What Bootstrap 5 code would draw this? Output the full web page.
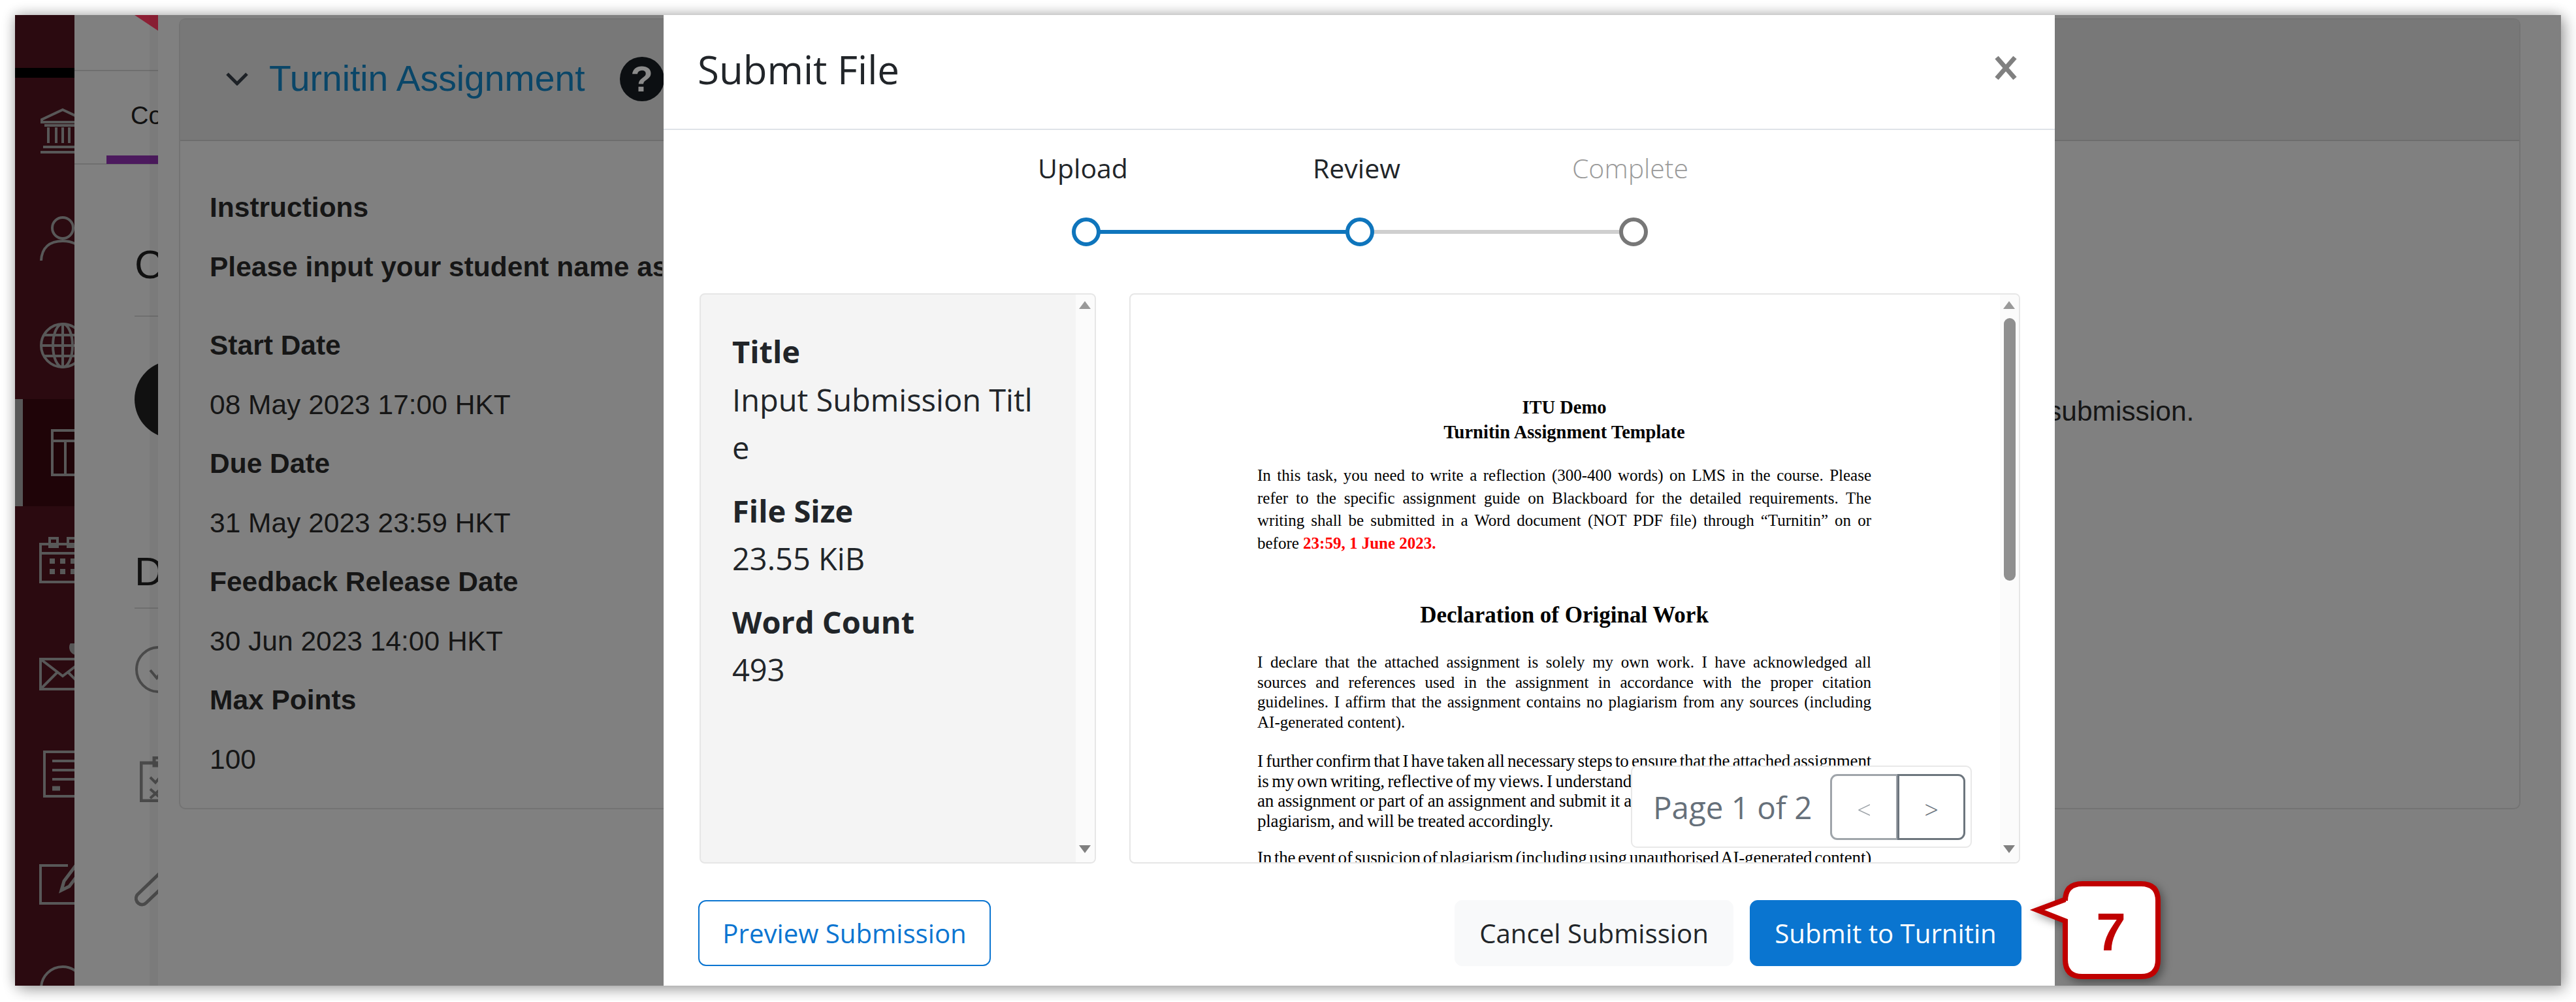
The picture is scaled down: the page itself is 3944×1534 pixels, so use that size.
<!DOCTYPE html>
<html lang="en">
<head>
    <meta charset="UTF-8">
    <title>Submit File</title>
    <link href="https://cdn.jsdelivr.net/npm/bootstrap@5.3.0/dist/css/bootstrap.min.css" rel="stylesheet">
    <style>
        html, body { background: #fff; margin: 0; }
        body { padding: 23px; font-family: "Liberation Sans", Arial, sans-serif; overflow: hidden; }

        .shot { width: 3898px; height: 1486px; position: relative; overflow: hidden; background: #808080; box-shadow: 6px 6px 22px rgba(0,0,0,.32), -2px -2px 18px rgba(0,0,0,.2); color: #161616; }
        .shot-wrap { height: 100%; }

        /* left sidebar */
        .side { width: 91px; background: #2b0a10; overflow: hidden; flex: none; }
        .side-top { height: 81px; border-bottom: 15px solid #000; box-sizing: content-box; }
        .side-item { height: 164px; padding-left: 37px; display: flex; align-items: center; }
        .side-item svg { width: 72px; height: 72px; flex: none; fill: none; stroke: #585858; stroke-width: 4; }
        .side-on { background: #1f0408; border-left: 12px solid #585858; padding-left: 43px; }

        /* strip between sidebar and card */
        .strip { width: 128px; flex: none; overflow: hidden; position: relative; white-space: nowrap; }
        .strip-top { height: 86px; border-bottom: 2px solid #6f6f6f; }
        .strip-tabs { height: 143px; border-bottom: 2px solid #6f6f6f; padding-left: 49px; }
        .strip-tab { height: 142px; border-bottom: 13px solid #4c1a5e; padding: 40px 0 0 37px; font-size: 38px; color: #111; width: 79px; overflow: hidden; }
        .strip-head { margin: 118px 0 0 92px; font-size: 62px; line-height: 70px; color: #111; width: 36px; overflow: hidden; }
        .strip-head-d { margin-top: 169px; }
        .strip-rule { margin: 43px 0 0 92px; height: 2px; width: 200px; background: #6f6f6f; }
        .strip-rule-d { margin-top: 20px; }
        .strip-avatar { width: 119px; height: 119px; border-radius: 50%; background: #111; margin: 67px 0 0 92px; }
        .strip-ico { display: block; margin-left: 92px; fill: none; stroke: #4a4a4a; stroke-width: 4; }
        .ico-check { margin-top: 56px; }
        .ico-list { margin: 96px 0 0 100px; }
        .ico-clip { margin-top: 92px; }
        .corner-flag { position: absolute; left: 92px; top: 0; width: 36px; height: 24px; background: #8d2035; clip-path: polygon(0 0, 100% 0, 100% 100%); }

        /* assignment panel behind the dialog */
        .panel { flex: 1 1 auto; padding: 5px 62px 0 32px; box-shadow: -13px 0 0 rgba(0,0,0,.035); position: relative; }
        .tii-card { height: 1211px; background: transparent; border: 2px solid #737373; border-radius: 10px; --bs-card-bg: transparent; }
        .tii-head { height: 186px; background: #787878; border-bottom: 2px solid #6d6d6d; padding: 0 0 2px 70px; }
        .tii-title { font-size: 55.3px; color: #0a4668; margin-left: 32px; line-height: 1; }
        .tii-help { width: 68px; height: 68px; border-radius: 50%; background: #0c0f12; color: #8a8a8a; font-weight: 700; font-size: 56px; line-height: 68px; text-align: center; margin-left: 53px; }
        .tii-body { padding: 57px 0 0 45px; font-size: 42.5px; line-height: 90.5px; white-space: nowrap; }
        .tii-clip { width: 693px; overflow: hidden; }
        .tii-gap { margin-top: 30px; }
        .tii-aside { position: absolute; left: 2859px; top: 369px; }

        /* dialog */
        .sf-modal { position: absolute; left: 993px; top: 0; bottom: 0; width: 2130px; background: #fff; border: 0; border-radius: 0; font-family: "Open Sans", "Liberation Sans", sans-serif; color: #212529; }
        .sf-head { height: 176px; padding: 0 57px 0 52px; border-bottom: 2px solid #dfe3e8; border-radius: 0; }
        .sf-title { font-size: 60px; line-height: 1; font-weight: 400; margin-top: -8px; }
        .sf-close { width: 36px; height: 36px; margin-top: -12px; display: block; }
        .sf-body { padding: 0 51px 0 55px; flex: none; }
        .sf-step-labels { padding: 28px 12px 0 0; font-size: 41px; line-height: 60px; }
        .sf-step-label { width: 419px; text-align: center; }
        .sf-step-off { color: #9a9a9a; font-weight: 300; }
        .sf-track { display: block; margin: 43px auto 0; width: 900px; height: 50px; transform: translateX(-1px); }
        .sf-panes { margin-top: 69px; height: 873px; gap: 51px; }
        .pane-info { width: 607px; border: 2px solid #e6e6e6; border-radius: 8px; overflow: hidden; flex: none; background: #f4f4f4; }
        .pane-doc { width: 1364px; border: 2px solid #e6e6e6; border-radius: 8px; overflow: hidden; flex: none; position: relative; background: #fff; }
        .info-text { padding: 51px 0 0 48px; font-size: 47px; line-height: 73.5px; flex: 1 1 auto; min-width: 0; }
        .info-text b { display: block; font-weight: 700; }
        .info-text span { display: block; width: 470px; word-break: break-all; margin-bottom: 23px; }
        .track-bar { width: 29px; flex: none; background: #fbfbfb; position: relative; }
        .track-up, .track-down { position: absolute; left: 5px; width: 0; height: 0; border-left: 9px solid transparent; border-right: 9px solid transparent; }
        .track-up { top: 10px; border-bottom: 12px solid #999; }
        .track-down { bottom: 14px; border-top: 12px solid #808080; }
        .track-thumb { position: absolute; left: 6px; top: 36px; width: 18px; height: 402px; border-radius: 9px; background: #8f8f8f; }

        .doc-page { width: 1331px; flex: none; height: 100%; overflow: hidden; padding: 154px 197px 0 194px; font-family: "Liberation Serif", "Times New Roman", serif; font-size: 25px; color: #000; text-align: justify; }
        .doc-title { text-align: center; font-weight: 700; font-size: 28.5px; line-height: 38px; }
        .doc-big { text-align: center; font-weight: 700; font-size: 35px; line-height: 44px; margin: 71px 0 35px; }
        .doc-p1 { line-height: 34.5px; margin: 30px 0 0; }
        .doc-p2 { line-height: 30.5px; margin: 0 0 29px; }
        .doc-p3 { font-size: 27px; line-height: 30.5px; letter-spacing: -.2px; word-spacing: -3px; white-space: nowrap; }
        .doc-line-full { text-align: justify; text-align-last: justify; white-space: normal; }
        .doc-line-part { width: 573px; text-align: justify; text-align-last: justify; white-space: normal; }
        .doc-line-last { word-spacing: -1px; margin-bottom: 26px; }
        .doc-red { color: #f00; font-weight: 700; }

        .pager-box { position: absolute; left: 766px; top: 721px; width: 522px; height: 126px; background: #fff; border: 2px solid #e8e8e8; border-radius: 9px; padding-right: 8px; }
        .pager-text { font-size: 47.5px; color: #66707a; margin: 2px 0 0 32px; line-height: 1; }
        .pager-btns .btn { width: 104px; height: 101px; font-size: 38px; font-weight: 300; line-height: 1; border-width: 3px; border-radius: 11px; padding: 8px 0 0; --bs-btn-color: #6c757d; --bs-btn-border-color: #6c757d; font-family: "Open Sans", sans-serif; }

        .sf-foot { padding: 56px 51px 0 53px; border: 0; }
        .sf-btn { height: 101px; font-size: 40.2px; line-height: 1; border-radius: 12px; padding: 2px 0 0; display: flex; align-items: center; justify-content: center; }
        .sf-preview { width: 448px; border: 2px solid #0b75d1; color: #0b75d1; background: #fff; }
        .sf-cancel { width: 427px; background: #f8f9fa; border-color: #f8f9fa; color: #212529; }
        .sf-submit { width: 416px; margin-left: 25px; background: #0a75d0; border-color: #0a75d0; color: #fff; }

        .note-bubble { position: absolute; left: 3082px; top: 1321px; width: 210px; height: 160px; filter: drop-shadow(4px 5px 7px rgba(0,0,0,.4)); }
        .note-bubble text { font-family: "Liberation Sans", sans-serif; font-weight: 700; font-size: 82px; fill: #c00000; }
    </style>
</head>
<body>
    <div class="shot">
        <div class="d-flex shot-wrap">
            <div class="side">
                <div class="side-top"></div>
                <div class="side-item"><svg viewBox="0 0 72 72"><path d="M36 3 68 18V22H4V18ZM8 27H64M14 30V54M26 30V54M46 30V54M58 30V54M36 30V54M6 60H66M2 68H70"/></svg></div>
                <div class="side-item"><svg viewBox="0 0 72 72"><circle cx="36" cy="20" r="16"/><path d="M3 70C4 50 16 40 36 40 56 40 68 50 69 70"/></svg></div>
                <div class="side-item"><svg viewBox="0 0 72 72"><circle cx="36" cy="36" r="33"/><ellipse cx="36" cy="36" rx="15" ry="33"/><path d="M36 3V69M3 36H69M8 20H64M8 52H64"/></svg></div>
                <div class="side-item side-on"><svg viewBox="0 0 72 72"><path d="M2 2H70V70H2ZM2 18H70M22 18V70M38 32H56V54H38Z"/></svg></div>
                <div class="side-item"><svg viewBox="0 0 72 72"><path d="M2 12H70V70H2ZM2 26H70M16 3H28V16H16ZM44 3H56V16H44Z"/><path stroke-width="8" d="M16 38H24M32 38H40M48 38H56M16 54H24M32 54H40M48 54H56"/></svg></div>
                <div class="side-item"><svg viewBox="0 0 72 72"><path d="M2 24H70V70H2ZM2 24 36 50 70 24M2 70 28 44M70 70 44 44"/><circle cx="58" cy="6" r="10" fill="#585858"/></svg></div>
                <div class="side-item"><svg viewBox="0 0 72 72"><path d="M8 2H70V70H8ZM20 16H56M20 30H56M20 44H56"/><path stroke-width="7" d="M20 58H32"/></svg></div>
                <div class="side-item"><svg viewBox="0 0 72 72"><path d="M44 12H2V70H62V40"/><path stroke-width="5" d="M34 50 38 36 62 4 70 12 46 44Z"/></svg></div>
                <div class="side-item"><svg viewBox="0 0 72 72"><circle cx="36" cy="36" r="33"/></svg></div>
            </div>

            <div class="strip">
                <div class="corner-flag"></div>
                <div class="strip-top"></div>
                <div class="strip-tabs"><div class="strip-tab">Co</div></div>
                <div class="strip-head">C</div>
                <div class="strip-rule"></div>
                <div class="strip-avatar"></div>
                <div class="strip-head strip-head-d">D</div>
                <div class="strip-rule strip-rule-d"></div>
                <svg class="strip-ico ico-check" width="74" height="74" viewBox="0 0 74 74"><circle cx="37" cy="37" r="34"/><path d="M24 38 34 50 52 26"/></svg>
                <svg class="strip-ico ico-list" width="70" height="70" viewBox="0 0 70 70"><path stroke-width="5" d="M2 10H60V68H2ZM22 2H42V14H22Z"/><path d="M16 32 24 40 36 26M16 50 32 64M32 50 16 64"/></svg>
                <svg class="strip-ico ico-clip" width="70" height="70" viewBox="0 0 70 70"><path stroke-width="5" d="M4 50 52 4 66 16 18 62C10 70 -2 60 4 50Z"/></svg>
            </div>

            <div class="panel">
                <div class="card tii-card">
                    <div class="card-header tii-head d-flex align-items-center">
                        <svg width="34" height="20" viewBox="0 0 34 20" fill="none" stroke="#1d2126" stroke-width="5"><path d="M2 2 17 17 32 2"/></svg>
                        <span class="tii-title">Turnitin Assignment</span>
                        <span class="tii-help">?</span>
                    </div>
                    <div class="card-body tii-body position-relative">
                        <div class="fw-bold">Instructions</div>
                        <div class="fw-bold tii-clip">Please input your student name as</div>
                        <div class="fw-bold tii-gap">Start Date</div>
                        <div>08 May 2023 17:00 HKT</div>
                        <div class="fw-bold">Due Date</div>
                        <div>31 May 2023 23:59 HKT</div>
                        <div class="fw-bold">Feedback Release Date</div>
                        <div>30 Jun 2023 14:00 HKT</div>
                        <div class="fw-bold">Max Points</div>
                        <div>100</div>
                        <div class="tii-aside">submission.</div>
                    </div>
                </div>
            </div>
        </div>

        <div class="modal-content sf-modal d-flex flex-column">
            <div class="modal-header sf-head d-flex justify-content-between align-items-center">
                <h5 class="modal-title sf-title">Submit File</h5>
                <svg class="sf-close" viewBox="0 0 36 36" stroke="#808080" stroke-width="7"><path d="M4 2 32 34M32 2 4 34"/></svg>
            </div>
            <div class="modal-body sf-body">
                <div class="sf-step-labels d-flex justify-content-center">
                    <div class="sf-step-label">Upload</div>
                    <div class="sf-step-label">Review</div>
                    <div class="sf-step-label sf-step-off">Complete</div>
                </div>
                <svg class="sf-track" viewBox="0 0 900 50" fill="#fff" stroke-width="6">
                    <path d="M30 25H450" stroke="#0f75bc"/>
                    <path d="M450 25H869" stroke="#cfcfcf"/>
                    <circle cx="31" cy="25" r="19" stroke="#0f75bc"/>
                    <circle cx="450" cy="25" r="19" stroke="#0f75bc"/>
                    <circle cx="869" cy="25" r="19" stroke="#777"/>
                </svg>
                <div class="sf-panes d-flex">
                    <div class="pane-info d-flex">
                        <div class="info-text">
                            <b>Title</b>
                            <span>Input Submission Title</span>
                            <b>File Size</b>
                            <span>23.55 KiB</span>
                            <b>Word Count</b>
                            <span>493</span>
                        </div>
                        <div class="track-bar"><i class="track-up"></i><i class="track-down"></i></div>
                    </div>
                    <div class="pane-doc d-flex">
                        <div class="doc-page">
                            <div class="doc-title">ITU Demo</div>
                            <div class="doc-title">Turnitin Assignment Template</div>
                            <p class="doc-p1">In this task, you need to write a reflection (300-400 words) on LMS in the course. Please refer to the specific assignment guide on Blackboard for the detailed requirements. The writing shall be submitted in a Word document (NOT PDF file) through “Turnitin” on or before <span class="doc-red">23:59, 1 June 2023.</span></p>
                            <div class="doc-big">Declaration of Original Work</div>
                            <p class="doc-p2">I declare that the attached assignment is solely my own work. I have acknowledged all sources and references used in the assignment in accordance with the proper citation guidelines. I affirm that the assignment contains no plagiarism from any sources (including AI-generated content).</p>
                            <div class="doc-p3 doc-line-full">I further confirm that I have taken all necessary steps to ensure that the attached assignment</div>
                            <div class="doc-p3 doc-line-part">is my own writing, reflective of my views. I understand</div>
                            <div class="doc-p3 doc-line-part">an assignment or part of an assignment and submit it a</div>
                            <div class="doc-p3 doc-line-last">plagiarism, and will be treated accordingly.</div>
                            <div class="doc-p3 doc-line-full">In the event of suspicion of plagiarism (including using unauthorised AI-generated content)</div>
                        </div>
                        <div class="track-bar flex-grow-1"><i class="track-up"></i><i class="track-thumb"></i><i class="track-down"></i></div>
                        <div class="pager-box d-flex align-items-center justify-content-between">
                            <span class="pager-text">Page 1 of 2</span>
                            <div class="btn-group pager-btns">
                                <button type="button" class="btn btn-outline-secondary disabled">&lt;</button>
                                <button type="button" class="btn btn-outline-secondary">&gt;</button>
                            </div>
                        </div>
                    </div>
                </div>
            </div>
            <div class="modal-footer sf-foot d-flex justify-content-between">
                <button type="button" class="btn sf-btn sf-preview m-0">Preview Submission</button>
                <div class="d-flex m-0">
                    <button type="button" class="btn sf-btn sf-cancel">Cancel Submission</button>
                    <button type="button" class="btn sf-btn sf-submit">Submit to Turnitin</button>
                </div>
            </div>
        </div>

        <svg class="note-bubble" viewBox="0 0 210 160">
            <path d="M83 9H173Q199 9 199 35V125Q199 151 173 151H83Q57 151 57 125V66L14 49 57 33V35Q57 9 83 9Z" fill="#fff" stroke="#c00000" stroke-width="8" stroke-linejoin="miter"/>
            <text x="127" y="111" text-anchor="middle">7</text>
        </svg>
    </div>
</body>
</html>
